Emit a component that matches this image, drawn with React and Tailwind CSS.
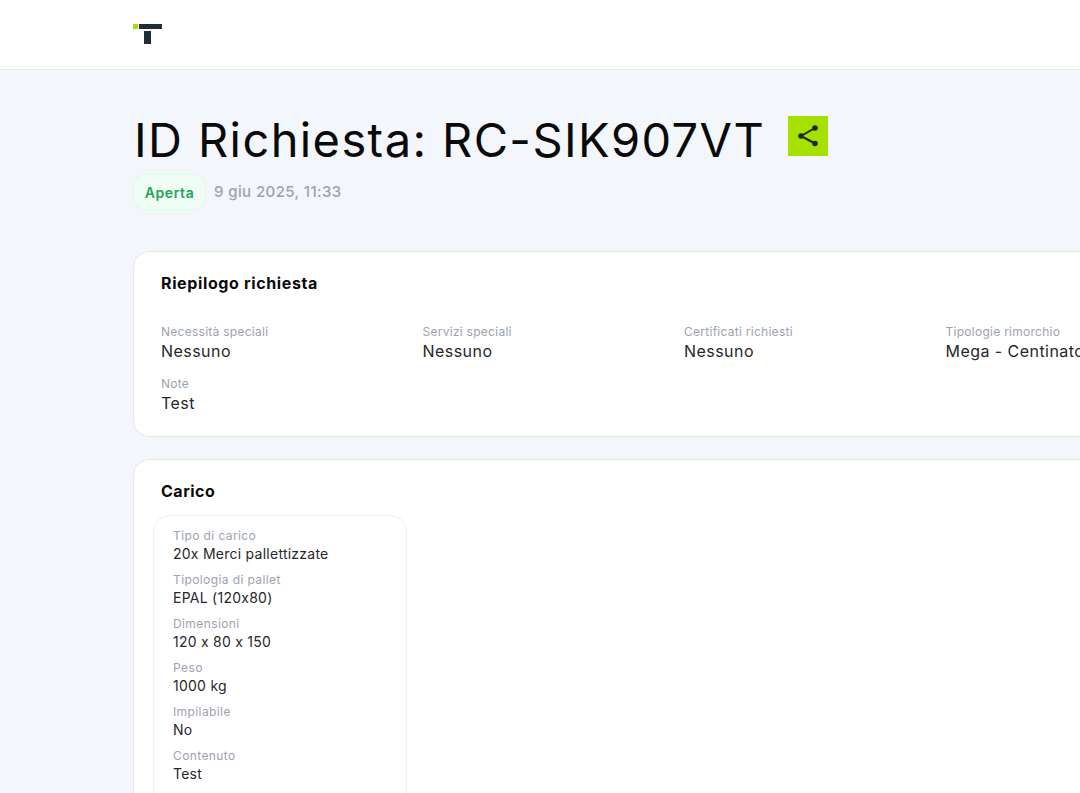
const summary = [
  { label: "Necessità speciali", value: "Nessuno" },
  { label: "Servizi speciali", value: "Nessuno" },
  { label: "Certificati richiesti", value: "Nessuno" },
  { label: "Tipologie rimorchio", value: "Mega - Centinato" },
];

const load = [
  { label: "Tipo di carico", value: "20x Merci pallettizzate" },
  { label: "Tipologia di pallet", value: "EPAL (120x80)" },
  { label: "Dimensioni", value: "120 x 80 x 150" },
  { label: "Peso", value: "1000 kg" },
  { label: "Impilabile", value: "No" },
  { label: "Contenuto", value: "Test" },
];

function Logo() {
  return (
    <svg width="30" height="20" viewBox="0 0 30 20" className="block">
      <rect x="0" y="0" width="5" height="5" fill="#a4e000" />
      <rect x="6" y="0" width="23" height="5" fill="#1f2d38" />
      <rect x="11" y="7" width="7" height="13" fill="#1f2d38" />
    </svg>
  );
}

function ShareIcon() {
  return (
    <svg width="24" height="24" viewBox="0 0 24 24" fill="#1d2a33" stroke="#1d2a33" strokeWidth="2">
      <line x1="5" y1="12" x2="19" y2="4" />
      <line x1="5" y1="12" x2="19" y2="19.5" />
      <circle cx="5" cy="12" r="2.8" stroke="none" />
      <circle cx="19" cy="4" r="2.8" stroke="none" />
      <circle cx="19" cy="19.5" r="2.8" stroke="none" />
    </svg>
  );
}

function SummaryItem({ label, value }) {
  return (
    <div>
      <p className="text-[12px] leading-[16px] tracking-[0.27px] text-[#9ca3af]">{label}</p>
      <p className="-mt-px text-[16px] leading-[24px] tracking-[0.45px] text-[#27272a]">{value}</p>
    </div>
  );
}

export default function App() {
  return (
    <div className="h-screen overflow-hidden bg-[#f3f6fa] font-['Inter',sans-serif]">
      <header className="flex h-[70px] items-center border-b border-[#e5e7eb] bg-white pb-[2px] pl-[133px]">
        <Logo />
      </header>

      <main className="w-[1235px] pl-[133px] pt-[46px]">
        <div className="flex items-start">
          <h1 className="ml-px text-[47px] leading-[48px] tracking-[1.4px] font-normal text-[#0a0a0a]">
            ID Richiesta: RC-SIK907VT
          </h1>
          <button className="ml-[23px] flex h-10 w-10 items-center justify-center bg-[#a4e000]">
            <ShareIcon />
          </button>
        </div>

        <div className="mt-[10px] flex items-center">
          <span className="flex h-9 w-[73px] items-center justify-center rounded-xl border border-[#dcfce7] bg-[#f0fdf4] text-[14px] font-semibold tracking-[0.6px] text-[#22a559]">
            Aperta
          </span>
          <span className="ml-2 text-[15px] font-medium tracking-[0.4px] text-[#9ca3af]">9 giu 2025, 11:33</span>
        </div>

        <section className="mt-[41px] h-[186px] rounded-2xl border border-[#e5e7eb] bg-white px-[27px] pt-[21px]">
          <h2 className="text-[16px] leading-[20px] tracking-[0.63px] font-bold text-[#0a0a0a]">Riepilogo richiesta</h2>
          <div className="mt-[31px] grid grid-cols-4 gap-y-[13px]">
            {summary.map((item) => (
              <SummaryItem key={item.label} {...item} />
            ))}
            <SummaryItem label="Note" value="Test" />
          </div>
        </section>

        <section className="mt-[22px] rounded-2xl border border-[#e5e7eb] bg-white px-[19px] pt-[21px] pb-6">
          <h2 className="ml-2 text-[16px] leading-[20px] tracking-[0.5px] font-bold text-[#0a0a0a]">Carico</h2>
          <div className="mt-[14px] w-[254px] rounded-2xl border border-[#eef0f3] px-[19px] pt-3 pb-3">
            {load.map((item) => (
              <div key={item.label} className="mb-2">
                <p className="text-[12px] leading-[16px] tracking-[0.4px] text-[#9ca3af]">{item.label}</p>
                <p className="text-[14px] leading-[20px] tracking-[0.25px] text-[#27272a]">{item.value}</p>
              </div>
            ))}
          </div>
        </section>
      </main>
    </div>
  );
}
